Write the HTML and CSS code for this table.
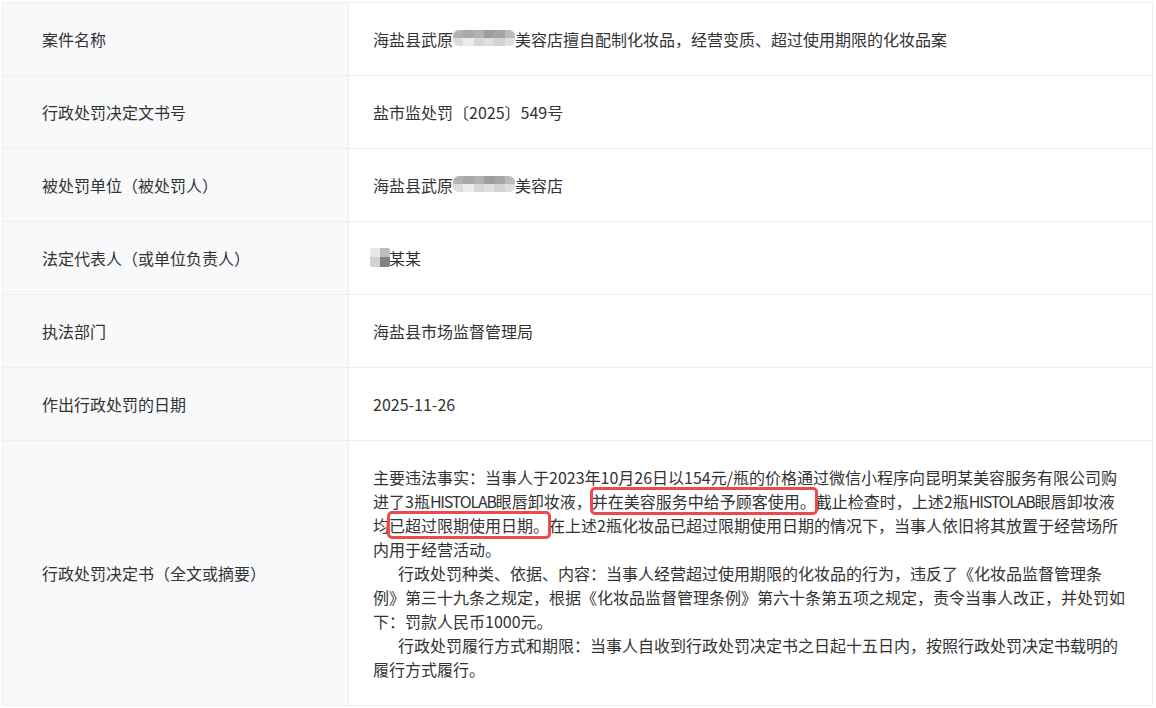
FILE: index.html
```html
<!DOCTYPE html>
<html lang="zh-CN">
<head>
<meta charset="utf-8">
<title>行政处罚信息</title>
<link rel="stylesheet" href="styles.css">
</head>
<body>
<div class="page">
  <div class="detail">
    <div class="label">案件名称</div>
    <div class="value">海盐县武原<span class="mosaic mosaic-wide"><i></i><i></i><i></i><i></i><i></i><i></i><i></i><i></i><i></i><i></i><i></i><i></i></span>美容店擅自配制化妆品，经营变质、超过使用期限的化妆品案</div>

    <div class="label">行政处罚决定文书号</div>
    <div class="value">盐市监处罚〔2025〕549号</div>

    <div class="label">被处罚单位（被处罚人）</div>
    <div class="value">海盐县武原<span class="mosaic mosaic-wide"><i></i><i></i><i></i><i></i><i></i><i></i><i></i><i></i><i></i><i></i><i></i><i></i></span>美容店</div>

    <div class="label">法定代表人（或单位负责人）</div>
    <div class="value"><span class="mosaic mosaic-small"><i></i><i></i><i></i><i></i></span>某某</div>

    <div class="label">执法部门</div>
    <div class="value">海盐县市场监督管理局</div>

    <div class="label">作出行政处罚的日期</div>
    <div class="value">2025-11-26</div>

    <div class="label">行政处罚决定书（全文或摘要）</div>
    <div class="value text">
      <p>主要违法事实：当事人于2023年10月26日以154元/瓶的价格通过微信小程序向昆明某美容服务有限公司购<br>进了3瓶<span class="latin">HISTOLAB</span>眼唇卸妆液，<span class="mark">并在美容服务中给予顾客使用。</span>截止检查时，上述2瓶<span class="latin">HISTOLAB</span>眼唇卸妆液<br>均<span class="mark">已超过限期使用日期。</span>在上述2瓶化妆品已超过限期使用日期的情况下，当事人依旧将其放置于经营场所<br>内用于经营活动。</p>
      <p class="indent">行政处罚种类、依据、内容：当事人经营超过使用期限的化妆品的行为，违反了《化妆品监督管理条<br>例》第三十九条之规定，根据《化妆品监督管理条例》第六十条第五项之规定，责令当事人改正，并处罚如<br>下：罚款人民币1000元。</p>
      <p class="indent">行政处罚履行方式和期限：当事人自收到行政处罚决定书之日起十五日内，按照行政处罚决定书载明的<br>履行方式履行。</p>
    </div>
  </div>
</div>
</body>
</html>
```

FILE: styles.css
```css
* {
  box-sizing: border-box;
}

html, body {
  margin: 0;
  padding: 0;
  background: #ffffff;
}

body {
  font-family: "Noto Sans CJK SC", "Noto Sans", "Liberation Sans", sans-serif;
  font-size: 16px;
  color: #333333;
}

.page {
  padding: 2px 3px 0 2px;
}

.detail {
  display: grid;
  grid-template-columns: 346px 804px;
  border-top: 1px solid #eceef1;
  border-left: 1px solid #eceef1;
}

.label,
.value {
  border-right: 1px solid #eceef1;
  border-bottom: 1px solid #eceef1;
  line-height: 24px;
  display: flex;
  align-items: center;
}

.label {
  background: #f8f9fb;
  padding: 24px 20px 24px 39px;
}

.value {
  background: #ffffff;
  padding: 24px 24px;
}

.value.text {
  display: block;
}

.value.text p {
  margin: 0;
  white-space: nowrap;
}

.value.text p.indent {
  text-indent: 25px;
}

.latin {
  letter-spacing: -1.2px;
}

.mark {
  outline: 3px solid #ec4a4d;
  outline-offset: -1px;
  border-radius: 3px;
}

.mosaic {
  display: inline-grid;
  overflow: hidden;
  vertical-align: middle;
}

.mosaic-wide {
  width: 62px;
  height: 16px;
  grid-template-columns: repeat(6, 1fr);
  grid-template-rows: 1fr 1fr;
  margin-top: -2px;
  border-radius: 6px;
  filter: blur(0.7px);
}

.mosaic-wide i:nth-child(1) { background: #b3b3b6; }
.mosaic-wide i:nth-child(2) { background: #a9a9ad; }
.mosaic-wide i:nth-child(3) { background: #b1b2b6; }
.mosaic-wide i:nth-child(4) { background: #9f9c9b; }
.mosaic-wide i:nth-child(5) { background: #a5a4a6; }
.mosaic-wide i:nth-child(6) { background: #b9babf; }
.mosaic-wide i:nth-child(7) { background: #dcdcdc; }
.mosaic-wide i:nth-child(8) { background: #ececec; }
.mosaic-wide i:nth-child(9) { background: #d7d7d7; }
.mosaic-wide i:nth-child(10) { background: #e0dfdf; }
.mosaic-wide i:nth-child(11) { background: #d3d3d3; }
.mosaic-wide i:nth-child(12) { background: #dedee0; }

.mosaic-small {
  width: 20px;
  height: 19px;
  grid-template-columns: 1fr 1fr;
  grid-template-rows: 1fr 1fr;
  margin-left: -3px;
  margin-right: -1px;
  margin-top: -2px;
  border-radius: 2px;
  filter: blur(0.3px);
}

.mosaic-small i:nth-child(1) { background: #e9e7e4; }
.mosaic-small i:nth-child(2) { background: #bfbebe; }
.mosaic-small i:nth-child(3) { background: #d6d2cf; }
.mosaic-small i:nth-child(4) { background: #838383; }
```
